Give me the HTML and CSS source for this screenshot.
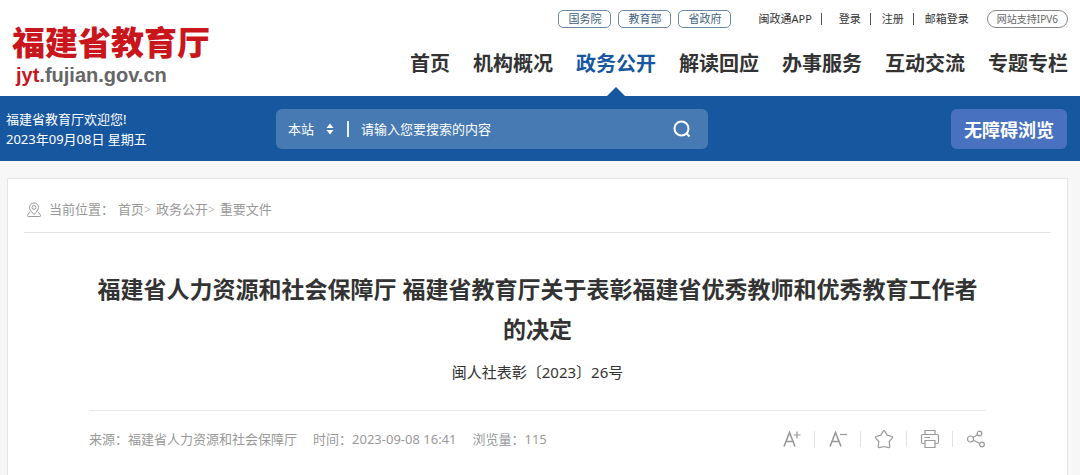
FILE: index.html
```html
<!DOCTYPE html>
<html lang="zh-CN">
<head>
<meta charset="utf-8">
<meta name="viewport" content="width=device-width, initial-scale=1">
<title>福建省教育厅</title>
<link rel="stylesheet" href="styles.css">
</head>
<body>
<header class="header">
  <a class="logo" href="#">
    <span class="logo-name">福建省教育厅</span>
    <span class="logo-url"><span class="logo-accent">jyt</span>.fujian.gov.cn</span>
  </a>
  <div class="header-right">
    <div class="top-links">
      <div class="pills">
        <a class="pill" href="#">国务院</a>
        <a class="pill" href="#">教育部</a>
        <a class="pill" href="#">省政府</a>
      </div>
      <div class="account">
        <a class="app" href="#">闽政通APP</a>
        <a href="#">登录</a>
        <a href="#">注册</a>
        <a href="#">邮箱登录</a>
      </div>
      <span class="ipv6">网站支持IPV6</span>
    </div>
    <nav class="nav">
      <a href="#">首页</a>
      <a href="#">机构概况</a>
      <a class="active" href="#">政务公开</a>
      <a href="#">解读回应</a>
      <a href="#">办事服务</a>
      <a href="#">互动交流</a>
      <a href="#">专题专栏</a>
    </nav>
  </div>
</header>

<div class="bar">
  <div class="welcome">
    <p>福建省教育厅欢迎您!</p>
    <p>2023年09月08日 星期五</p>
  </div>
  <form class="search">
    <label class="scope">
      <select class="scope-select" aria-label="搜索范围"><option>本站</option></select>
      <svg class="scope-arrows" viewBox="0 0 8 12" aria-hidden="true"><path d="M4 .5 7.500 5H.5zM4 11.500.5 7h7z"/></svg>
    </label>
    <input class="search-input" type="text" placeholder="请输入您要搜索的内容" aria-label="搜索内容">
    <button class="search-button" type="submit" aria-label="搜索">
      <svg class="search-icon" viewBox="0 0 18 18" aria-hidden="true"><circle cx="8.500" cy="8.500" r="7"/><path d="m13.300 13.300 3.200 3.200"/></svg>
    </button>
  </form>
  <button class="accessible" type="button">无障碍浏览</button>
</div>

<main class="card">
  <nav class="crumbs" aria-label="当前位置">
    <svg class="pin" viewBox="0 0 16 16" aria-hidden="true"><path d="M8 12.500C5.300 9.800 3.500 7.800 3.500 5.400a4.500 4.500 0 0 1 9 0C12.500 7.800 10.700 9.800 8 12.500z"/><circle cx="8" cy="5.500" r="1.900"/><path d="M3.800 9.700 1.500 13.300q-.4 1.200.8 1.200h11.400q1.200 0 .8-1.200L12.200 9.700"/></svg>
    <span class="crumbs-label">当前位置：</span>
    <a href="#">首页</a><span class="arrow">&gt;</span>
    <a href="#">政务公开</a><span class="arrow">&gt;</span>
    <a href="#">重要文件</a>
  </nav>
  <article class="article">
    <h1 class="title">福建省人力资源和社会保障厅 福建省教育厅关于表彰福建省优秀教师和优秀教育工作者的决定</h1>
    <p class="number">闽人社表彰〔2023〕26号</p>
    <div class="meta">
      <div class="facts">
        <span>来源：福建省人力资源和社会保障厅</span>
        <span>时间：2023-09-08 16:41</span>
        <span>浏览量：115</span>
      </div>
      <div class="tools">
        <button class="tool" type="button" aria-label="放大字体"><svg viewBox="0 0 20 20" aria-hidden="true"><path class="letter" d="M2 17.500 7.500 3.500 13 17.500M4 12.500h7"/><path d="M15 2.500v7M11.500 6h7"/></svg></button>
        <button class="tool" type="button" aria-label="缩小字体"><svg viewBox="0 0 20 20" aria-hidden="true"><path class="letter" d="M2 17.500 7.500 3.500 13 17.500M4 12.500h7"/><path d="M12 5.500h7"/></svg></button>
        <button class="tool" type="button" aria-label="收藏"><svg viewBox="0 0 20 20" aria-hidden="true"><path d="M9.200 2.200q.8-1 1.600 0l2.300 4 4.900 1.300q1 .5.400 1.500l-3.200 3.700.6 5q-.1 1-1.200.9L10 17.500l-4.600 1.100q-1.100.1-1.200-.9l.6-5L1.600 9q-.6-1 .4-1.500l4.900-1.300z"/></svg></button>
        <button class="tool" type="button" aria-label="打印"><svg viewBox="0 0 20 20" aria-hidden="true"><path d="M5 5.500v-4h10v4M5 14.500H3A1.500 1.500 0 0 1 1.500 13V7A1.500 1.500 0 0 1 3 5.500h14A1.500 1.500 0 0 1 18.500 7v6a1.500 1.500 0 0 1-1.500 1.500h-2M5 11.500h10v7H5zM4.500 8.500H10"/></svg></button>
        <button class="tool" type="button" aria-label="分享"><svg viewBox="0 0 20 20" aria-hidden="true"><circle cx="4.500" cy="10" r="3"/><circle cx="13.500" cy="4.500" r="2.300"/><circle cx="16" cy="15.500" r="2.300"/><path d="m7 8.500 4.500-2.800M7.300 11.200l6.500 3.300"/></svg></button>
      </div>
    </div>
  </article>
</main>
</body>
</html>
```
FILE: styles.css
```css
* {
  box-sizing: border-box;
}

body {
  margin: 0;
  min-height: 100vh;
  display: flex;
  flex-direction: column;
  background: #f7f7f7;
  color: #333;
  font-family: "Noto Sans", "Noto Sans CJK SC", sans-serif;
  font-size: 13px;
}

a {
  color: inherit;
  text-decoration: none;
}

p,
h1 {
  margin: 0;
}

button,
input,
select {
  border: 0;
  padding: 0;
  background: none;
  color: inherit;
  font: inherit;
}

.header {
  display: flex;
  justify-content: space-between;
  padding: 10px 12px 0;
  background: #fff;
}

.logo {
  display: flex;
  flex-direction: column;
  padding-top: 13px;
}

.logo-name {
  color: #c9161d;
  font-size: 33px;
  font-weight: 900;
  line-height: 40px;
}

.logo-url {
  padding-left: 4px;
  color: #666;
  font: bold 20px/24px "Liberation Sans", sans-serif;
}

.logo-accent {
  color: #c9161d;
}

.header-right {
  display: flex;
  flex-direction: column;
  align-items: flex-end;
}

.top-links {
  display: flex;
  align-items: center;
  font-size: 11px;
  line-height: 16px;
}

.pills {
  display: flex;
  gap: 7px;
  margin-right: 27px;
}

.pill {
  padding: 0 9px;
  border: 1px solid #6c8aa5;
  border-radius: 5px;
  color: #40607e;
}

.account {
  display: flex;
}

.account a + a {
  display: flex;
  align-items: center;
}

.account a + a::before {
  content: "";
  width: 1px;
  height: 12px;
  margin: 0 11px 0 9px;
  background: #555;
}

.account .app + a::before {
  margin-right: 17px;
}

.ipv6 {
  margin-left: 18px;
  padding: 0 9px;
  border: 1px solid #888;
  border-radius: 9px;
  color: #666;
  font-size: 10px;
}

.nav {
  display: flex;
  gap: 23px;
  margin-top: 21px;
  font-size: 20px;
  font-weight: 700;
  line-height: 30px;
}

.nav a {
  display: flex;
  flex-direction: column;
  align-items: center;
  height: 47px;
}

.nav .active {
  color: #1757a0;
}

.nav .active::after {
  content: "";
  margin-top: auto;
  border: solid transparent;
  border-width: 0 9px 9px;
  border-bottom-color: #1757a0;
}

.bar {
  display: grid;
  grid-template-columns: 270px minmax(0, 432px) 1fr;
  align-items: center;
  padding: 13px 13px 12px 6px;
  background: #1757a0;
  color: #fff;
}

.welcome {
  line-height: 20px;
}

.search {
  display: flex;
  align-items: center;
  height: 40px;
  padding: 0 17px 0 12px;
  border-radius: 6px;
  background: #477ab2;
}

.scope {
  display: flex;
  align-items: center;
  gap: 11px;
  padding-right: 13px;
}

.scope-select {
  appearance: none;
  line-height: 20px;
}

.scope-arrows {
  width: 8px;
  height: 12px;
  fill: #fff;
}

.search-input {
  flex: 1;
  min-width: 0;
  height: 16px;
  padding-left: 12px;
  border-left: 2px solid #e5f2fc;
}

.search-input::placeholder {
  color: #fff;
}

.search-button {
  display: flex;
}

.search-icon {
  width: 18px;
  height: 18px;
  fill: none;
  stroke: #fff;
  stroke-width: 2;
}

.accessible {
  justify-self: end;
  height: 40px;
  padding: 0 13px;
  border-radius: 6px;
  background: #4872c0;
  font-size: 18px;
  font-weight: 700;
}

.card {
  flex: 1;
  margin: 17px 12px 0 7px;
  padding: 0 16px;
  border: 1px solid #e5e5e5;
  border-bottom: 0;
  background: #fff;
}

.crumbs {
  display: flex;
  align-items: center;
  padding: 20px 2px 12px;
  border-bottom: 1px solid #e2e2e2;
  color: #999;
  line-height: 21px;
}

.pin {
  width: 16px;
  height: 16px;
  margin-right: 7px;
  fill: none;
  stroke: #999;
}

.crumbs-label {
  margin-right: 4px;
}

.arrow {
  margin-right: 5px;
  color: #bbb;
  font-size: 12px;
}

.article {
  padding: 36px 65px 0;
}

.title {
  font-size: 23px;
  font-weight: 700;
  line-height: 40px;
  text-align: center;
}

.number {
  padding: 12px 0 27px;
  border-bottom: 1px solid #e8e8e8;
  font-size: 15px;
  line-height: 22px;
  text-align: center;
}

.meta {
  display: flex;
  justify-content: space-between;
  align-items: center;
  padding-top: 18px;
  color: #999;
  line-height: 20px;
}

.facts {
  display: flex;
  gap: 16px;
}

.tools {
  display: flex;
  align-items: center;
}

.tool {
  display: flex;
  align-items: center;
}

.tool + .tool::before {
  content: "";
  width: 1px;
  height: 16px;
  margin: 0 13px 0 12px;
  background: #e2e2e2;
}

.tool svg {
  width: 20px;
  height: 20px;
  fill: none;
  stroke: #999;
  stroke-width: 1.2;
}

.tool .letter {
  stroke-width: 1.6;
}
```
